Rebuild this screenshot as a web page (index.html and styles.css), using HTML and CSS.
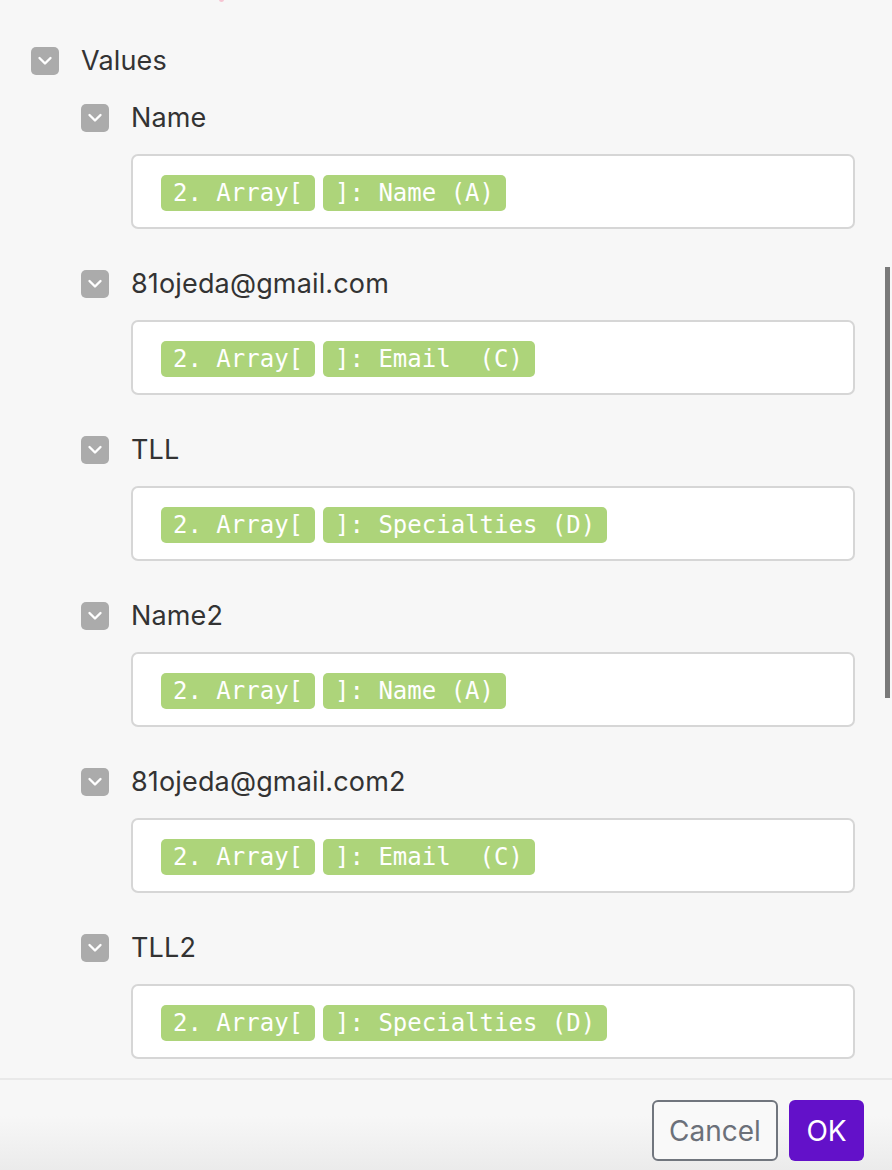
FILE: index.html
```html
<!DOCTYPE html>
<html lang="en">
<head>
    <meta charset="UTF-8">
    <meta name="viewport" content="width=device-width, initial-scale=1.0">
    <title>Values</title>
    <link rel="stylesheet" href="styles.css">
</head>
<body>
    <div class="panel">
        <span class="cut-mark"></span>
        <div class="group-head">
            <span class="toggle"><svg viewBox="0 0 28 28"><path d="M8.5 11l5.5 5.5 5.5-5.5"/></svg></span>
            <span class="group-label">Values</span>
        </div>

        <div class="field">
            <div class="field-head">
                <span class="toggle"><svg viewBox="0 0 28 28"><path d="M8.5 11l5.5 5.5 5.5-5.5"/></svg></span>
                <span class="field-label">Name</span>
            </div>
            <div class="field-box">
                <span class="pill">2. Array[</span>
                <span class="pill">]: Name (A)</span>
            </div>
        </div>

        <div class="field">
            <div class="field-head">
                <span class="toggle"><svg viewBox="0 0 28 28"><path d="M8.5 11l5.5 5.5 5.5-5.5"/></svg></span>
                <span class="field-label">81ojeda@gmail.com</span>
            </div>
            <div class="field-box">
                <span class="pill">2. Array[</span>
                <span class="pill">]: Email&nbsp; (C)</span>
            </div>
        </div>

        <div class="field">
            <div class="field-head">
                <span class="toggle"><svg viewBox="0 0 28 28"><path d="M8.5 11l5.5 5.5 5.5-5.5"/></svg></span>
                <span class="field-label">TLL</span>
            </div>
            <div class="field-box">
                <span class="pill">2. Array[</span>
                <span class="pill">]: Specialties (D)</span>
            </div>
        </div>

        <div class="field">
            <div class="field-head">
                <span class="toggle"><svg viewBox="0 0 28 28"><path d="M8.5 11l5.5 5.5 5.5-5.5"/></svg></span>
                <span class="field-label">Name2</span>
            </div>
            <div class="field-box">
                <span class="pill">2. Array[</span>
                <span class="pill">]: Name (A)</span>
            </div>
        </div>

        <div class="field">
            <div class="field-head">
                <span class="toggle"><svg viewBox="0 0 28 28"><path d="M8.5 11l5.5 5.5 5.5-5.5"/></svg></span>
                <span class="field-label">81ojeda@gmail.com2</span>
            </div>
            <div class="field-box">
                <span class="pill">2. Array[</span>
                <span class="pill">]: Email&nbsp; (C)</span>
            </div>
        </div>

        <div class="field">
            <div class="field-head">
                <span class="toggle"><svg viewBox="0 0 28 28"><path d="M8.5 11l5.5 5.5 5.5-5.5"/></svg></span>
                <span class="field-label">TLL2</span>
            </div>
            <div class="field-box">
                <span class="pill">2. Array[</span>
                <span class="pill">]: Specialties (D)</span>
            </div>
        </div>

        <div class="scrollbar"></div>
    </div>

    <footer class="actions">
        <button class="btn btn-cancel">Cancel</button>
        <button class="btn btn-ok">OK</button>
    </footer>
</body>
</html>
```

FILE: styles.css
```css
html, body {
    margin: 0;
    padding: 0;
}
body {
    width: 892px;
    height: 1170px;
    overflow: hidden;
    background: #f7f7f7;
    font-family: Inter, "Noto Sans", sans-serif;
    color: #333;
}
.panel {
    position: relative;
    height: 1078px;
    overflow: hidden;
    box-sizing: border-box;
    padding: 43px 37px 0 31px;
}
.cut-mark {
    position: absolute;
    top: -3px;
    left: 219px;
    width: 5px;
    height: 5px;
    border-radius: 50%;
    background: #f6c4d2;
}
.toggle {
    display: flex;
    width: 28px;
    height: 28px;
    flex: none;
    margin-top: 1px;
    border-radius: 5px;
    background: #ababab;
}
.toggle svg {
    width: 28px;
    height: 28px;
    fill: none;
    stroke: #fff;
    stroke-width: 2.4;
    stroke-linecap: round;
    stroke-linejoin: round;
}
.group-head,
.field-head {
    display: flex;
    align-items: center;
    gap: 22px;
    height: 34px;
}
.group-head {
    margin-bottom: 23px;
}
.group-label,
.field-label {
    margin-top: 2px;
    font-size: 27px;
    line-height: 34px;
    letter-spacing: 0.15px;
}
.field {
    margin-left: 50px;
    margin-bottom: 37px;
}
.field-box {
    display: flex;
    gap: 8px;
    margin-top: 20px;
    margin-left: 50px;
    height: 75px;
    box-sizing: border-box;
    padding: 19px 28px;
    background: #fff;
    border: 2px solid #d6d6d6;
    border-radius: 7px;
}
.pill {
    display: inline-block;
    height: 36px;
    line-height: 36px;
    padding: 0 12px;
    border-radius: 5px;
    background: #add47a;
    color: #fff;
    font-family: "DejaVu Sans Mono", "Liberation Mono", monospace;
    font-size: 24px;
    white-space: pre;
}
.scrollbar {
    position: absolute;
    top: 267px;
    right: 2px;
    width: 5px;
    height: 431px;
    background: #7a7a7a;
}
.actions {
    display: flex;
    justify-content: flex-end;
    gap: 11px;
    height: 92px;
    box-sizing: border-box;
    padding: 20px 28px 0 0;
    border-top: 2px solid #e9e9e9;
    background: linear-gradient(#f7f7f7 40%, #ebebeb);
}
.btn {
    height: 61px;
    border-radius: 6px;
    font-family: Inter, "Noto Sans", sans-serif;
    font-size: 28px;
    cursor: pointer;
}
.btn-cancel {
    width: 126px;
    background: #f9f9f9;
    border: 2px solid #71767e;
    color: #6b7079;
}
.btn-ok {
    width: 75px;
    background: #6311c9;
    border: none;
    color: #fff;
}
```
